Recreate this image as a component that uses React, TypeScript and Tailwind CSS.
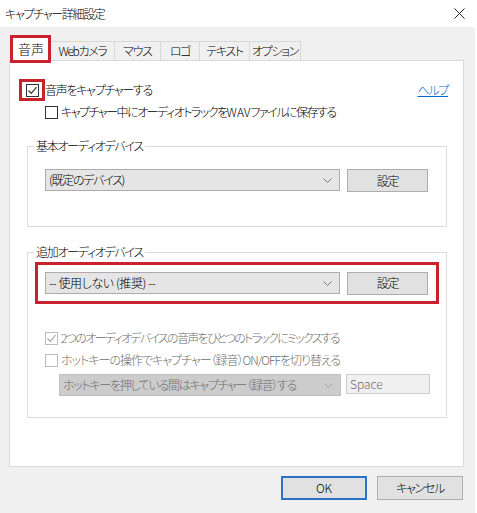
import React from 'react';

const FONT = "[font-family:'Noto_Sans_CJK_JP','Noto_Sans',sans-serif] [font-feature-settings:'palt'] tracking-[-1.3px] font-light whitespace-nowrap";

const Check = ({ color }: { color: string }) => (
  <svg width="11" height="11" viewBox="0 0 11 11" className="block">
    <path d="M1.5 5.5 L4.3 8.3 L9.5 2.2" fill="none" stroke={color} strokeWidth="1.2" />
  </svg>
);

const Box = ({ checked, disabled }: { checked?: boolean; disabled?: boolean }) => (
  <div
    className={`w-[13px] h-[13px] border flex items-center justify-center shrink-0 bg-white ${
      disabled ? 'border-[#bcbcbc]' : 'border-[#333333]'
    }`}
  >
    {checked && <Check color={disabled ? '#a8a8a8' : '#333333'} />}
  </div>
);

const Chevron = ({ color }: { color: string }) => (
  <svg width="9" height="5" viewBox="0 0 9 5" className="block">
    <path d="M0.5 0.5 L4.5 4.5 L8.5 0.5" fill="none" stroke={color} strokeWidth="1" />
  </svg>
);

const Select = ({ label, width, track = '' }: { label: string; width: string; track?: string }) => (
  <div className={`${width} h-[22px] bg-[#e5e5e5] border border-[#acacac] flex items-center pl-[3px] pr-[7px]`}>
    <span className={`flex-1 leading-none ${track}`}>{label}</span>
    <Chevron color="#7a7a7a" />
  </div>
);

const SettingsButton = () => (
  <div className="w-[81px] h-[23px] ml-[7px] bg-[#e1e1e1] border border-[#adadad] flex items-center justify-center leading-none">
    設定
  </div>
);

const tabs = ['Webカメラ', 'マウス', 'ロゴ', 'テキスト', 'オプション'];
const tabWidths = ['w-[64px]', 'w-[46px]', 'w-[39px]', 'w-[50px]', 'w-[51px]'];

export default function App() {
  return (
    <div className={`w-[477px] h-[513px] bg-white text-[12px] text-black ${FONT}`}>
      {/* title bar */}
      <div className="h-[27px] flex items-center pl-[5px] pr-[12px] bg-white">
        <span className="leading-none">キャプチャー詳細設定</span>
        <svg width="11" height="11" viewBox="0 0 11 11" className="ml-auto">
          <path d="M0.5 0.5 L10.5 10.5 M10.5 0.5 L0.5 10.5" stroke="#222" strokeWidth="1" />
        </svg>
      </div>

      <div className="w-[475px] h-[486px] bg-[#f0f0f0] pt-[8px]">
        {/* tab strip */}
        <div className="flex items-end ml-[10px] h-[25px] relative z-10">
          <div className="w-[41px] h-[28px] -mb-[3px] border-[3px] border-[#c8232c] bg-white flex items-start pt-[3px] pl-[5px] text-[13px] leading-[16px] tracking-normal">
            音声
          </div>
          {tabs.map((t, i) => (
            <div
              key={t}
              className={`${tabWidths[i]} h-[19px] border border-[#d9d9d9] border-l-0 border-b-0 bg-[#f0f0f0] flex items-center justify-center leading-none`}
            >
              {t}
            </div>
          ))}
        </div>

        {/* panel */}
        <div className="ml-[9px] w-[455px] h-[407px] bg-white border border-[#d9d9d9]">
          {/* row 1 */}
          <div className="mt-[18px] h-[22px] flex items-center">
            <div className="ml-[9px] w-[26px] h-[22px] border-[3px] border-[#c8232c] flex items-center justify-center">
              <Box checked />
            </div>
            <span className="leading-none">音声をキャプチャーする</span>
            <span className="ml-auto mr-[15px] text-[#0066cc] underline leading-none">ヘルプ</span>
          </div>
          {/* row 2 */}
          <div className="mt-[3px] h-[16px] flex items-center ml-[35px] gap-[3px]">
            <Box />
            <span className="leading-none tracking-[-1.5px]">
              キャプチャー中にオーディオトラックを<span className="tracking-normal">WAV</span>ファイルに保存する
            </span>
          </div>

          {/* group 1 */}
          <fieldset className="mt-[18px] ml-[17px] w-[420px] border border-[#dcdcdc] pb-[34px]">
            <legend className="ml-[6px] px-[2px] leading-[16px]">基本オーディオデバイス</legend>
            <div className="mt-[15px] ml-[17px] flex items-start">
              <Select label="(既定のデバイス)" width="w-[295px]" />
              <SettingsButton />
            </div>
          </fieldset>

          {/* group 2 */}
          <fieldset className="mt-[17px] ml-[17px] w-[420px] border border-[#dcdcdc] pb-[21px]">
            <legend className="ml-[6px] px-[2px] leading-[16px]">追加オーディオデバイス</legend>
            <div className="mt-[2px] ml-[7px] w-[404px] h-[42px] border-[3px] border-[#c8232c] flex items-center pl-[7px]">
              <Select label="-- 使用しない (推奨) --" width="w-[295px]" track="tracking-[-0.4px]" />
              <SettingsButton />
            </div>
            <div className="mt-[26px] ml-[17px] h-[16px] flex items-center gap-[3px] text-[#6d6d6d]">
              <Box checked disabled />
              <span className="leading-none tracking-[-1.7px]">2つのオーディオデバイスの音声をひとつのトラックにミックスする</span>
            </div>
            <div className="mt-[6px] ml-[17px] h-[16px] flex items-center gap-[3px] text-[#6d6d6d]">
              <Box disabled />
              <span className="leading-none tracking-[-1px]">ホットキーの操作でキャプチャー（録音）ON/OFFを切り替える</span>
            </div>
            <div className="mt-[6px] ml-[31px] flex items-start text-[#6d6d6d]">
              <div className="w-[282px] h-[22px] bg-[#cccccc] border border-[#bfbfbf] flex items-center pl-[3px] pr-[7px]">
                <span className="flex-1 leading-none">ホットキーを押している間はキャプチャー（録音）する</span>
                <Chevron color="#a0a0a0" />
              </div>
              <div className="ml-[5px] w-[84px] h-[20px] bg-[#f0f0f0] border border-[#cccccc] flex items-center pl-[3px] leading-none tracking-normal">
                Space
              </div>
            </div>
          </fieldset>
        </div>

        {/* footer buttons */}
        <div className="mt-[9px] flex justify-end pr-[12px] gap-[10px]">
          <div className="w-[86px] h-[24px] bg-[#e1e1e1] border-2 border-[#2a72c3] flex items-center justify-center leading-none tracking-normal">
            OK
          </div>
          <div className="w-[86px] h-[24px] bg-[#e1e1e1] border border-[#adadad] flex items-center justify-center leading-none">
            キャンセル
          </div>
        </div>
      </div>
    </div>
  );
}
